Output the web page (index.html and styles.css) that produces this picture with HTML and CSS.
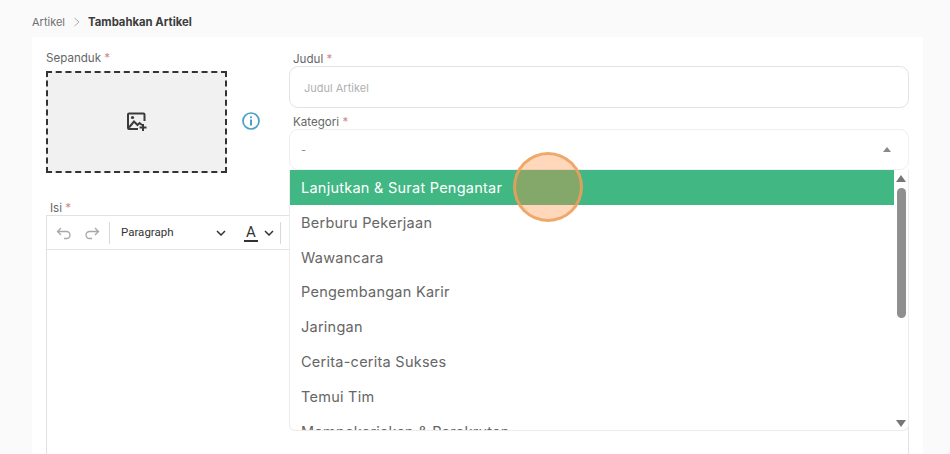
FILE: index.html
```html
<!DOCTYPE html>
<html>
<head>
  <title>Tambahkan Artikel</title>
  <link rel="stylesheet" href="styles.css">
</head>
<body>

  <div class="breadcrumb">
    <span class="crumb">Artikel</span>
    <svg class="crumb-sep" width="8" height="10" viewBox="0 0 8 10"><path d="M1.5 1l4.5 4-4.5 4" fill="none" stroke="#aaa" stroke-width="1"/></svg>
    <span class="crumb-current">Tambahkan Artikel</span>
  </div>

  <div class="card">
    <div class="top-row">
      <div class="banner-col">
        <div class="label">Sepanduk <span class="req">*</span></div>
        <div class="banner-row">
          <div class="banner">
            <svg width="22" height="22" viewBox="0 0 22 22">
              <path d="M18.5 10V3.5a1 1 0 0 0-1-1H3a1 1 0 0 0-1 1V17a1 1 0 0 0 1 1h9" fill="none" stroke="#3a3a3a" stroke-width="2"/>
              <path d="M3 16.5l5-6 3.5 3.5 2-2 2.5 2" fill="none" stroke="#3a3a3a" stroke-width="2"/>
              <circle cx="6.5" cy="6.5" r="1.6" fill="#3a3a3a"/>
              <path d="M17 13v7M13.500 16.500h7" stroke="#3a3a3a" stroke-width="2"/>
            </svg>
          </div>
          <svg class="info" width="18" height="18" viewBox="0 0 18 18">
            <circle cx="9" cy="9" r="8" fill="none" stroke="#4b9fc6" stroke-width="1.7"/>
            <circle cx="9" cy="5.300" r="1.100" fill="#4b9fc6"/>
            <rect x="8" y="7.500" width="2" height="6" fill="#4b9fc6"/>
          </svg>
        </div>
      </div>

      <div class="fields-col">
        <div class="label label-field">Judul <span class="req">*</span></div>
        <div class="input placeholder">Judul Artikel</div>

        <div class="label label-field label-second">Kategori <span class="req">*</span></div>
        <div class="select-wrap">
          <div class="select">
            <span>-</span>
            <span class="select-arrow"></span>
          </div>

          <div class="dropdown">
            <div class="options">
              <div class="option active">Lanjutkan &amp; Surat Pengantar</div>
              <div class="option">Berburu Pekerjaan</div>
              <div class="option">Wawancara</div>
              <div class="option">Pengembangan Karir</div>
              <div class="option">Jaringan</div>
              <div class="option">Cerita-cerita Sukses</div>
              <div class="option">Temui Tim</div>
              <div class="option">Mempekerjakan &amp; Perekrutan</div>
            </div>
            <div class="scrollbar">
              <span class="arrow-up"></span>
              <span class="thumb"></span>
              <span class="arrow-down"></span>
            </div>
          </div>
        </div>
      </div>
    </div>

    <div class="label label-isi">Isi <span class="req">*</span></div>
    <div class="editor">
      <div class="toolbar">
        <svg class="tool-undo" width="16" height="14" viewBox="0 0 16 14"><path d="M5 2L1.500 5.500 5 9M1.500 5.500H10.500a3.500 3.500 0 0 1 0 7H8" fill="none" stroke="#a8a8a8" stroke-width="1.300"/></svg>
        <svg class="tool-redo" width="16" height="14" viewBox="0 0 16 14"><path d="M11 2l3.500 3.500L11 9M14.500 5.500H5.500a3.500 3.500 0 0 0 0 7H8" fill="none" stroke="#a8a8a8" stroke-width="1.300"/></svg>
        <span class="tool-sep"></span>
        <span class="tool-format">Paragraph</span>
        <svg class="chevron" width="10" height="6" viewBox="0 0 10 6"><path d="M1 1l4 4 4-4" fill="none" stroke="#333" stroke-width="1.500"/></svg>
        <span class="tool-color">A</span>
        <svg class="chevron chevron-color" width="10" height="6" viewBox="0 0 10 6"><path d="M1 1l4 4 4-4" fill="none" stroke="#333" stroke-width="1.500"/></svg>
        <span class="tool-sep"></span>
      </div>
      <div class="editor-body"></div>
    </div>
  </div>

  <!-- click highlight -->
  <div class="cursor-dot"></div>

</body>
</html>
```

FILE: styles.css
```css
body {
  margin: 0;
  height: 454px;
  overflow: hidden;
  background-color: #fafafa;
  font-family: 'Inter', 'Liberation Sans', sans-serif;
  color: #666;
  position: relative;
}

.breadcrumb {
  display: flex;
  align-items: center;
  height: 37px;
  padding: 14px 0 7px 32px;
  box-sizing: border-box;
  font-size: 11px;
}

.crumb {
  color: #707070;
}

.crumb-sep {
  margin: 0 7px 0 8px;
}

.crumb-current {
  font-size: 11.3px;
  font-weight: 700;
  color: #3c3c3c;
}

.card {
  margin: 0 27px 0 32px;
  padding: 13px 14px 0;
  background-color: #fff;
  height: 500px;
}

.top-row {
  display: flex;
}

.label {
  font-size: 11.6px;
  line-height: 14px;
  color: #666;
}

.req {
  color: #cf8a8a;
}

.banner-col {
  width: 243px;
  padding-top: 1px;
  flex-shrink: 0;
}

.banner-row {
  display: flex;
  align-items: center;
  margin-top: 6px;
}

.banner {
  width: 181px;
  height: 102px;
  box-sizing: border-box;
  border: 2px dashed #333;
  background-color: #f1f1f1;
  display: flex;
  align-items: center;
  justify-content: center;
}

.info {
  margin-left: 15px;
  margin-top: -2px;
}

.fields-col {
  flex: 1;
  padding-top: 2px;
  min-width: 0;
}

.label-field {
  padding-left: 4px;
}

.label-second {
  margin-top: 7px;
}

.input {
  height: 42px;
  box-sizing: border-box;
  border: 1px solid #e3e3e3;
  border-radius: 9px;
  padding: 1px 14px 0;
  display: flex;
  align-items: center;
  font-size: 11px;
}

.placeholder {
  color: #b0b0b0;
}

.select-wrap {
  position: relative;
}

.select {
  height: 41px;
  box-sizing: border-box;
  border: 1px solid #efefef;
  border-radius: 9px;
  padding: 0 17px 0 11px;
  display: flex;
  align-items: center;
  justify-content: space-between;
  font-size: 11px;
  color: #888;
}

.select-arrow {
  width: 0;
  height: 0;
  border-left: 4px solid transparent;
  border-right: 4px solid transparent;
  border-bottom: 5px solid #888;
}

.dropdown {
  position: absolute;
  top: 41px;
  left: 0;
  right: 0;
  height: 261px;
  display: flex;
  box-sizing: border-box;
  background-color: #fff;
  border: 1px solid #ececec;
  border-top: none;
  border-radius: 0 0 6px 6px;
  overflow: hidden;
  z-index: 5;
}

.options {
  flex: 1;
  overflow: hidden;
  min-width: 0;
}

.option {
  height: 34.8px;
  line-height: 35px;
  padding-left: 11px;
  font-size: 14.5px;
  letter-spacing: 0.25px;
  color: #666;
  white-space: nowrap;
}

.option.active {
  background-color: #41b783;
  color: #fff;
}

.scrollbar {
  width: 14px;
  flex-shrink: 0;
  display: flex;
  flex-direction: column;
  align-items: center;
  padding-top: 5px;
  box-sizing: border-box;
}

.arrow-up {
  width: 0;
  height: 0;
  border-left: 5px solid transparent;
  border-right: 5px solid transparent;
  border-bottom: 7px solid #777;
}

.thumb {
  width: 9px;
  height: 130px;
  margin-top: 6px;
  background-color: #8f8f8f;
  border-radius: 5px;
}

.arrow-down {
  width: 0;
  height: 0;
  margin-top: 102px;
  border-left: 5px solid transparent;
  border-right: 5px solid transparent;
  border-top: 7px solid #777;
}

.label-isi {
  margin-top: 28px;
  padding-left: 4px;
}

.editor {
  border: 1px solid #e2e2e2;
  box-sizing: border-box;
}

.toolbar {
  height: 33px;
  display: flex;
  align-items: center;
  padding-left: 9px;
  border-bottom: 1px solid #e2e2e2;
}

.tool-redo {
  margin-left: 12px;
}

.tool-sep {
  width: 1px;
  height: 22px;
  margin-left: 9px;
  background-color: #d8d8d8;
}

.tool-format {
  font-family: 'Roboto', 'Liberation Sans', sans-serif;
  font-size: 11.5px;
  color: #333;
  margin-left: 11px;
  margin-bottom: 2px;
  width: 95px;
}

.tool-color {
  font-family: 'Roboto', 'Liberation Sans', sans-serif;
  font-size: 15px;
  line-height: 16px;
  color: #333;
  margin-left: 18px;
  border-bottom: 2px solid #333;
  padding: 0 2px;
}

.chevron-color {
  margin-left: 6px;
}

.tool-color + .chevron-color + .tool-sep {
  margin-left: 6px;
}

.editor-body {
  height: 400px;
}

.cursor-dot {
  position: absolute;
  left: 513px;
  top: 152px;
  width: 70px;
  height: 70px;
  box-sizing: border-box;
  border-radius: 50%;
  background-color: rgba(255, 140, 60, 0.35);
  border: 3px solid rgba(236, 160, 90, 0.85);
  z-index: 10;
}
```
